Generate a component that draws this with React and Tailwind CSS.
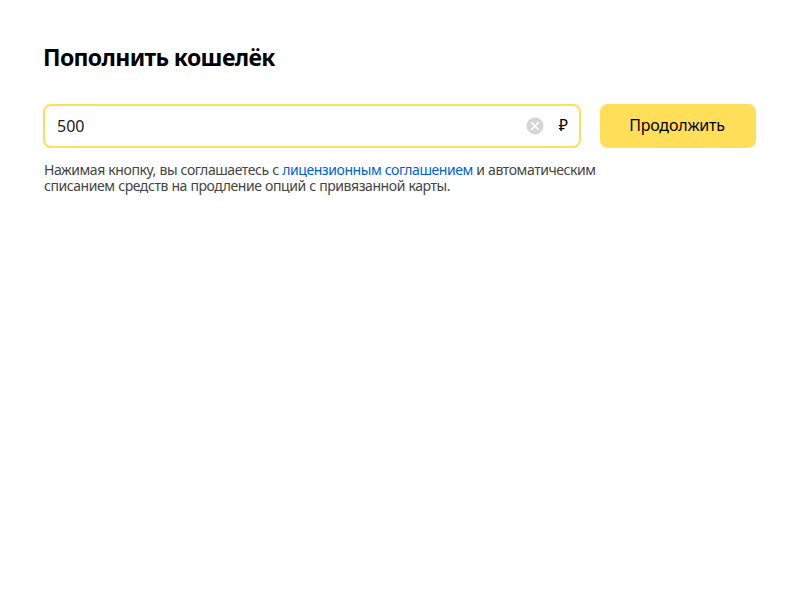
import React from 'react';

export default function App() {
  return (
    <main className="min-h-screen bg-white px-11 pt-[39px] font-['Noto_Sans',sans-serif] text-black">
      <h1 className="-ml-px h-[65px] origin-left scale-x-[0.958] whitespace-nowrap text-[24px] leading-9 font-bold tracking-[-0.65px]">Пополнить кошелёк</h1>
      <form className="-ml-px flex gap-[19px]">
        <div className="flex h-11 w-[538px] items-center rounded-lg border-2 border-[#ffde5a] pr-[11px] pl-3">
          <input defaultValue="500" className="min-w-0 flex-1 text-[16px] text-[#1a1a1a] outline-none" />
          <button type="button" aria-label="Очистить" className="mr-[15px]">
            <svg width="18" height="18" viewBox="0 0 18 18" fill="none">
              <circle cx="9" cy="9" r="8.5" fill="#d5d5d5" />
              <path d="M5.2 5.2l7.6 7.6M12.8 5.2l-7.6 7.6" stroke="white" strokeWidth="1.6" />
            </svg>
          </button>
          <span className="pb-0.5 text-[16px]">₽</span>
        </div>
        <button type="button" className="h-11 w-[156px] rounded-lg bg-[#ffde5a] pr-0.5 pb-0.5 text-[16px] tracking-[-0.2px]">Продолжить</button>
      </form>
      <p className="mt-3.5 text-[14px] leading-4 tracking-[-0.43px] [word-spacing:0.3px] whitespace-nowrap text-[#444]">
        Нажимая кнопку, вы соглашаетесь с <a className="text-[#0060d9]">лицензионным соглашением</a> и автоматическим<br />
        списанием средств на продление опций с привязанной карты.
      </p>
    </main>
  );
}
